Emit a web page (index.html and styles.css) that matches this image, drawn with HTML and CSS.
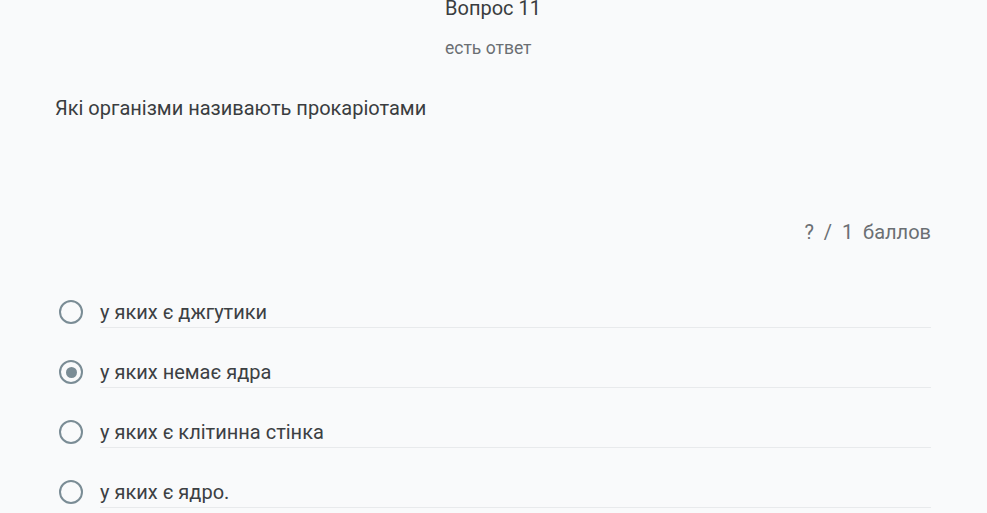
FILE: index.html
```html
<!DOCTYPE html>
<html lang="uk">
<head>
<meta charset="utf-8">
<link rel="stylesheet" href="styles.css">
</head>
<body>
<main class="page">
  <header class="head">
    <div class="head-inner">
      <div class="title">Вопрос 11</div>
      <div class="status">есть ответ</div>
    </div>
  </header>
  <p class="question">Які організми називають прокаріотами</p>
  <div class="points">?&nbsp; /&nbsp; 1&nbsp; баллов</div>
  <ul class="options">
    <li class="option"><span class="radio"></span><span class="label">у яких є джгутики</span></li>
    <li class="option"><span class="radio checked"></span><span class="label">у яких немає ядра</span></li>
    <li class="option"><span class="radio"></span><span class="label">у яких є клітинна стінка</span></li>
    <li class="option"><span class="radio"></span><span class="label">у яких є ядро.</span></li>
  </ul>
</main>
</body>
</html>
```

FILE: styles.css
```css
html, body {
  margin: 0;
  padding: 0;
  background: #f9fafb;
  overflow: hidden;
}
body {
  font-family: Roboto, "Noto Sans", sans-serif;
  color: #3c4043;
}
.page {
  padding: 0 56px 0 55px;
}
.head {
  display: flex;
  justify-content: center;
  margin-top: -4px;
}
.head-inner {
  display: flex;
  flex-direction: column;
  align-items: flex-start;
}
.title {
  font-size: 20px;
  line-height: 24px;
  color: #3a3d40;
}
.status {
  font-size: 17.5px;
  line-height: 20px;
  margin-top: 18px;
  color: #6b6f73;
}
.question {
  margin: 38px 0 0;
  font-size: 20px;
  line-height: 24px;
  color: #3a3d40;
}
.points {
  margin-top: 100px;
  text-align: right;
  font-size: 20px;
  line-height: 24px;
  color: #6b6f73;
}
.options {
  list-style: none;
  margin: 38px 0 0;
  padding: 0;
}
.option {
  display: flex;
  align-items: flex-start;
  height: 60px;
}
.radio {
  box-sizing: border-box;
  width: 24px;
  height: 24px;
  border: 2.5px solid #7a8c95;
  border-radius: 50%;
  margin: 18px 17px 0 4px;
  display: flex;
  align-items: center;
  justify-content: center;
  flex: none;
}
.radio.checked::after {
  content: "";
  width: 11px;
  height: 11px;
  border-radius: 50%;
  background: #7a8c95;
}
.label {
  flex: 1;
  margin-top: 18px;
  font-size: 20px;
  line-height: 24px;
  padding-bottom: 3px;
  border-bottom: 1px solid #e8eaec;
}
```
